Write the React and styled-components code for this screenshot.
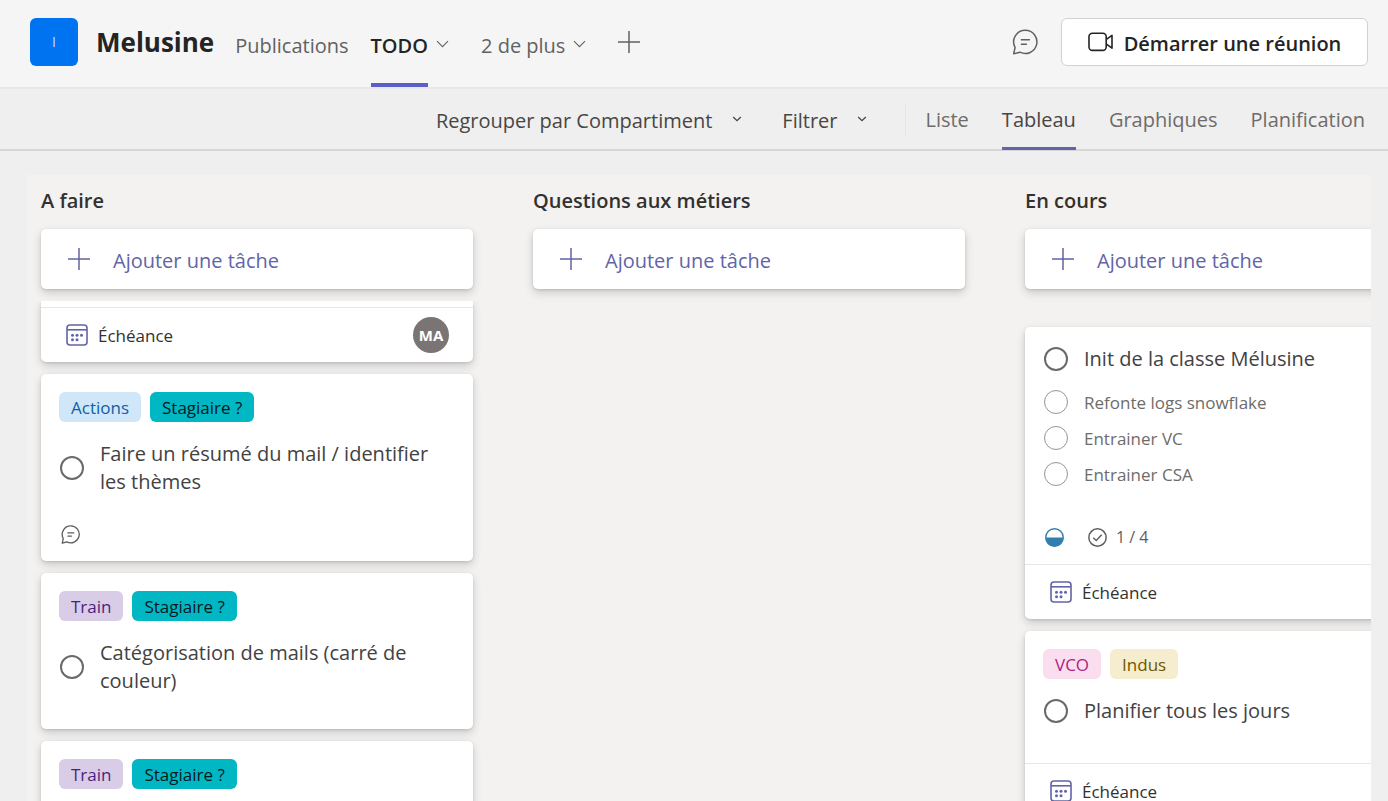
import React from "react";
import styled, { createGlobalStyle, css } from "styled-components";

const GlobalStyle = createGlobalStyle`
  * { box-sizing: border-box; }
  body {
    margin: 0;
    background: #efefef;
    font-family: "Open Sans", "Noto Sans", sans-serif;
    font-size: 20px;
    line-height: 28px;
    color: #424242;
  }
  button {
    font: inherit;
    color: inherit;
    background: none;
    border: 0;
    padding: 0;
    margin: 0;
    cursor: pointer;
    white-space: nowrap;
  }
  h1, h2, h3, ul { margin: 0; padding: 0; list-style: none; }
  svg { display: block; flex: none; }
`;

const Page = styled.div`
  height: 100vh;
  display: flex;
  flex-direction: column;
  overflow: hidden;
`;

const Header = styled.header`
  flex: none;
  height: 89px;
  display: flex;
  align-items: stretch;
  padding: 0 20px 0 30px;
  background: #f5f5f5;
  border-bottom: 2px solid #e8e8e8;
`;

const Logo = styled.div`
  width: 48px;
  height: 48px;
  margin: 18px 18px 0 0;
  flex: none;
  border-radius: 6px;
  background: #0074f0;
  color: #c4defa;
  font-size: 14px;
  line-height: 48px;
  text-align: center;
`;

const TeamName = styled.h1`
  margin-right: 21px;
  font-size: 26px;
  font-weight: 700;
  line-height: 84px;
  color: #242424;
`;

const Tabs = styled.nav`
  display: flex;
  flex: 1;
  align-items: stretch;
`;

const Tab = styled.button`
  display: flex;
  align-items: center;
  gap: 8px;
  margin-right: ${(p) => p.$after || 22}px;
  color: ${(p) => (p.$active ? "#242424" : "#616161")};
  font-weight: ${(p) => (p.$active ? 600 : 400)};

  svg { color: #616161; }
`;

const AddTab = styled(Tab)`
  height: 84px;
`;

const TabLabel = styled.span`
  height: 100%;
  line-height: 91px;
  border-bottom: 4px solid ${(p) => (p.$active ? "#5b5fc7" : "transparent")};
`;

const HeaderActions = styled.div`
  display: flex;
  align-items: center;
  gap: 23px;
  height: 84px;
  color: #616161;
`;

const MeetButton = styled.button`
  display: flex;
  align-items: center;
  justify-content: center;
  gap: 10px;
  width: 307px;
  height: 48px;
  border: 1px solid #d1d1d1;
  border-radius: 6px;
  background: #fff;
  color: #242424;
  font-weight: 600;
`;

const Label = styled.span`
  padding-top: ${(p) => p.$drop || 2}px;
`;

const Toolbar = styled.div`
  flex: none;
  display: flex;
  justify-content: flex-end;
  height: 62px;
  padding-right: 23px;
  border-bottom: 2px solid #d6d6d6;
`;

const MenuButton = styled.button`
  display: flex;
  align-items: center;
  gap: 20px;
  margin-right: ${(p) => p.$after}px;
  color: #484644;
`;

const Divider = styled.span`
  width: 1px;
  height: 32px;
  margin: 15px 19px 0 0;
  background: #e6e6e6;
`;

const Views = styled.nav`
  display: flex;
  gap: 33px;
`;

const View = styled.button`
  height: 61px;
  padding-top: 3px;
  border-bottom: 3px solid ${(p) => (p.$active ? "#6264a7" : "transparent")};
  color: ${(p) => (p.$active ? "#484644" : "#6e6c6a")};
`;

const Board = styled.main`
  flex: 1;
  min-height: 0;
  display: flex;
  gap: 60px;
  margin: 24px 17px 0 27px;
  padding-left: 14px;
  background: #f3f2f0;
  overflow: hidden;
`;

const Column = styled.section`
  flex: none;
  width: 432px;
  display: flex;
  flex-direction: column;
`;

const ColumnTitle = styled.h2`
  padding: 12px 0 14px;
  font-size: 20px;
  line-height: 28px;
  font-weight: 600;
  color: #323130;
`;

const raised = css`
  border-radius: 5px;
  background: #fff;
  box-shadow: 0 4px 10px rgba(0, 0, 0, 0.16), 0 1px 3px rgba(0, 0, 0, 0.12);
`;

const AddTask = styled.button`
  ${raised}
  flex: none;
  display: flex;
  align-items: center;
  gap: 22px;
  height: 60px;
  padding: 0 26px;
  color: #6264a7;
`;

const CardList = styled.div`
  flex: 1;
  min-height: 0;
  display: flex;
  flex-direction: column;
  gap: 12px;
  margin: 12px -8px 0;
  padding: ${(p) => (p.$scrolled ? 0 : 26)}px 8px 0;
  overflow: hidden;
`;

const Card = styled.article`
  ${raised}
  flex: none;
  ${(p) => p.$cut && "border-top-left-radius: 0; border-top-right-radius: 0; padding-top: 6px;"}
`;

const CardBody = styled.div`
  padding: 18px 18px ${(p) => p.$bottom}px;
`;

const Tags = styled.ul`
  display: flex;
  gap: 9px;
  margin-bottom: 18px;
`;

const Tag = styled.li`
  padding: 2px 12px 0;
  border-radius: 6px;
  font-size: 17px;
  line-height: 28px;
  background: ${(p) => p.$tone.back};
  color: ${(p) => p.$tone.text};
`;

const Task = styled.label`
  display: flex;
  align-items: center;
  gap: 16px;
  padding-left: 1px;
  color: #424242;
`;

const SubTask = styled(Task)`
  height: 36px;
  font-size: 17px;
  color: #6e6c6a;
`;

const SubTasks = styled.div`
  padding-top: 11px;
`;

const Tick = styled.input.attrs({ type: "checkbox" })`
  appearance: none;
  flex: none;
  width: 24px;
  height: 24px;
  margin: 0;
  border: ${(p) => (p.$light ? "1px solid #979593" : "2px solid #6c6a68")};
  border-radius: 50%;
  background: #fff;
`;

const Meta = styled.div`
  display: flex;
  align-items: center;
  height: 18px;
  margin-top: ${(p) => p.$above}px;
  padding-left: 2px;
  font-size: 16px;
  line-height: 18px;
  color: #605e5c;
`;

const CheckCount = styled.span`
  display: flex;
  align-items: center;
  gap: 9px;
  margin-left: 24px;
`;

const CardFooter = styled.footer`
  display: flex;
  align-items: center;
  justify-content: space-between;
  height: 55px;
  padding: 0 24px;
  border-top: 1px solid #e6e6e6;
`;

const DueButton = styled.button`
  display: flex;
  align-items: center;
  gap: 9px;
  font-size: 17px;
  color: #323130;
`;

const Avatar = styled.span`
  width: 36px;
  height: 36px;
  border-radius: 50%;
  background: #7a7574;
  color: #fff;
  font-size: 15px;
  font-weight: 700;
  line-height: 36px;
  text-align: center;
`;

const tones = {
  actions: { back: "#cfe7f8", text: "#0f5fa6" },
  teal: { back: "#00b7c3", text: "#001a1c" },
  train: { back: "#d8cce6", text: "#4b1f80" },
  pink: { back: "#fbddf0", text: "#ad2280" },
  yellow: { back: "#f5edce", text: "#6d5700" },
};

const Chevron = () => (
  <svg width="13" height="8" viewBox="0 0 13 8" fill="none" stroke="currentColor" strokeWidth="1.1">
    <path d="M1 1.2 6.5 6.7 12 1.2" />
  </svg>
);

const SmallChevron = () => (
  <svg width="10" height="6" viewBox="0 0 10 6" fill="none" stroke="currentColor" strokeWidth="1.3">
    <path d="M1.2 1 5 4.7 8.8 1" />
  </svg>
);

const Plus = () => (
  <svg width="24" height="24" viewBox="0 0 24 24" fill="none" stroke="currentColor" strokeWidth="1.5">
    <path d="M12 1v22M1 12h22" />
  </svg>
);

const Chat = ({ size, stroke = 1.5 }) => (
  <svg width={size} height={size} viewBox="0 0 26 26" fill="none" stroke="currentColor" strokeWidth={stroke} strokeLinecap="round" strokeLinejoin="round">
    <path d="M13.4 1.3a11.6 11.6 0 1 1-5.4 21.9L1.7 24.7 3.1 18.5A11.6 11.6 0 0 1 13.4 1.3Z" />
    <path d="M9.4 10.8h8M9.4 15.2h5" />
  </svg>
);

const Camera = () => (
  <svg width="26" height="20" viewBox="0 0 26 20" fill="none" stroke="currentColor" strokeWidth="1.6" strokeLinejoin="round">
    <rect x="1" y="1.2" width="17.2" height="17.2" rx="3.4" />
    <path d="m18.4 7.4 5.6-4v12.8l-5.6-4" />
  </svg>
);

const Calendar = () => (
  <svg width="24" height="24" viewBox="0 0 24 24" fill="none" stroke="#6264a7" strokeWidth="1.6">
    <rect x="2" y="2" width="20" height="20" rx="3" />
    <path d="M2 6.8h20" />
    <g fill="#6264a7" stroke="none">
      <circle cx="7.5" cy="12.2" r="1.5" />
      <circle cx="12" cy="12.2" r="1.5" />
      <circle cx="16.5" cy="12.2" r="1.5" />
      <circle cx="7.5" cy="16.7" r="1.5" />
      <circle cx="12" cy="16.7" r="1.5" />
    </g>
  </svg>
);

const HalfDone = () => (
  <svg width="19" height="19" viewBox="0 0 18 18">
    <circle cx="9" cy="9" r="8.3" fill="#fff" stroke="#317faf" strokeWidth="1.3" />
    <path d="M.5 9h17a8.5 8.5 0 0 1-17 0Z" fill="#317faf" />
  </svg>
);

const CheckCircle = () => (
  <svg width="19" height="19" viewBox="0 0 18 18" fill="none" stroke="currentColor" strokeWidth="1.4">
    <circle cx="9" cy="9" r="8.2" />
    <path d="m5 9.2 2.8 2.6L13 6.4" />
  </svg>
);

const TagList = ({ items }) => (
  <Tags>
    {items.map(([text, tone]) => (
      <Tag key={text} $tone={tones[tone]}>{text}</Tag>
    ))}
  </Tags>
);

const Footer = ({ person }) => (
  <CardFooter>
    <DueButton><Calendar /><Label>Échéance</Label></DueButton>
    {person && <Avatar>{person}</Avatar>}
  </CardFooter>
);

const ListHead = ({ title }) => (
  <>
    <ColumnTitle>{title}</ColumnTitle>
    <AddTask><Plus /><Label $drop={3}>Ajouter une tâche</Label></AddTask>
  </>
);

export default function App() {
  return (
    <Page>
      <GlobalStyle />
      <Header>
        <Logo>I</Logo>
        <TeamName>Melusine</TeamName>
        <Tabs>
          <Tab><TabLabel>Publications</TabLabel></Tab>
          <Tab $active $after={32}><TabLabel $active>TODO</TabLabel><Chevron /></Tab>
          <Tab $after={31}><TabLabel>2 de plus</TabLabel><Chevron /></Tab>
          <AddTab aria-label="Ajouter un onglet"><Plus /></AddTab>
        </Tabs>
        <HeaderActions>
          <button aria-label="Conversation"><Chat size={26} /></button>
          <MeetButton><Camera /><Label $drop={3}>Démarrer une réunion</Label></MeetButton>
        </HeaderActions>
      </Header>

      <Toolbar>
        <MenuButton $after={40}><Label $drop={3}>Regrouper par Compartiment</Label><SmallChevron /></MenuButton>
        <MenuButton $after={38}><Label $drop={3}>Filtrer</Label><SmallChevron /></MenuButton>
        <Divider />
        <Views>
          <View>Liste</View>
          <View $active>Tableau</View>
          <View>Graphiques</View>
          <View>Planification</View>
        </Views>
      </Toolbar>

      <Board>
        <Column>
          <ListHead title="A faire" />
          <CardList $scrolled>
            <Card $cut><Footer person="MA" /></Card>
            <Card>
              <CardBody $bottom={18}>
                <TagList items={[["Actions", "actions"], ["Stagiaire ?", "teal"]]} />
                <Task><Tick />Faire un résumé du mail / identifier les thèmes</Task>
                <Meta $above={29}><Chat size={19} stroke={1.8} /></Meta>
              </CardBody>
            </Card>
            <Card>
              <CardBody $bottom={34}>
                <TagList items={[["Train", "train"], ["Stagiaire ?", "teal"]]} />
                <Task><Tick />Catégorisation de mails (carré de couleur)</Task>
              </CardBody>
            </Card>
            <Card>
              <CardBody $bottom={34}>
                <TagList items={[["Train", "train"], ["Stagiaire ?", "teal"]]} />
              </CardBody>
            </Card>
          </CardList>
        </Column>

        <Column>
          <ListHead title="Questions aux métiers" />
        </Column>

        <Column>
          <ListHead title="En cours" />
          <CardList>
            <Card>
              <CardBody $bottom={18}>
                <Task><Tick />Init de la classe Mélusine</Task>
                <SubTasks>
                  <SubTask><Tick $light /><Label>Refonte logs snowflake</Label></SubTask>
                  <SubTask><Tick $light /><Label>Entrainer VC</Label></SubTask>
                  <SubTask><Tick $light /><Label>Entrainer CSA</Label></SubTask>
                </SubTasks>
                <Meta $above={36}><HalfDone /><CheckCount><CheckCircle />1 / 4</CheckCount></Meta>
              </CardBody>
              <Footer />
            </Card>
            <Card>
              <CardBody $bottom={38}>
                <TagList items={[["VCO", "pink"], ["Indus", "yellow"]]} />
                <Task><Tick />Planifier tous les jours</Task>
              </CardBody>
              <Footer />
            </Card>
          </CardList>
        </Column>
      </Board>
    </Page>
  );
}
